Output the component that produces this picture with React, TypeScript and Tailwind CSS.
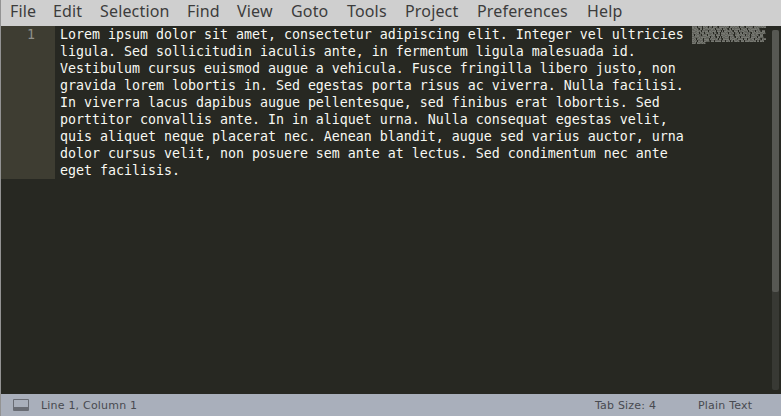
const MENUS = [
  { label: "File", width: "w-[43px]" },
  { label: "Edit", width: "w-[47px]" },
  { label: "Selection", width: "w-[87px]" },
  { label: "Find", width: "w-[50px]" },
  { label: "View", width: "w-[54px]" },
  { label: "Goto", width: "w-[56px]" },
  { label: "Tools", width: "w-[58px]" },
  { label: "Project", width: "w-[72px]" },
  { label: "Preferences", width: "w-[110px]" },
  { label: "Help", width: "w-[50px]" },
];

const LINES = [
  "Lorem ipsum dolor sit amet, consectetur adipiscing elit. Integer vel ultricies",
  "ligula. Sed sollicitudin iaculis ante, in fermentum ligula malesuada id.",
  "Vestibulum cursus euismod augue a vehicula. Fusce fringilla libero justo, non",
  "gravida lorem lobortis in. Sed egestas porta risus ac viverra. Nulla facilisi.",
  "In viverra lacus dapibus augue pellentesque, sed finibus erat lobortis. Sed",
  "porttitor convallis ante. In in aliquet urna. Nulla consequat egestas velit,",
  "quis aliquet neque placerat nec. Aenean blandit, augue sed varius auctor, urna",
  "dolor cursus velit, non posuere sem ante at lectus. Sed condimentum nec ante",
  "eget facilisis.",
];

function MenuBar() {
  return (
    <nav className="flex h-[26px] shrink-0 bg-[#cfcfcf] pl-[9px] font-['Noto_Sans',sans-serif] text-[16px] leading-[23px] tracking-[0.16px] text-[#3c3c3c]">
      {MENUS.map((m) => (
        <span key={m.label} className={`${m.width} shrink-0 whitespace-nowrap`}>
          {m.label}
        </span>
      ))}
    </nav>
  );
}

function Minimap() {
  return (
    <svg className="h-[18px] w-[74px] shrink-0" viewBox="0 0 78 18" preserveAspectRatio="none" shapeRendering="crispEdges">
      {LINES.map((line, row) =>
        [...line].map((ch, col) => {
          if (ch === " ") return null;
          const tall = /[A-Zbdfhklti]/.test(ch);
          const low = /[.,]/.test(ch);
          return (
            <g key={`${row}-${col}`} fill="#92938c">
              <rect x={col} y={row * 2} width="1" height="1" opacity={low ? 0.15 : tall ? 0.7 : 0.56} />
              <rect x={col} y={row * 2 + 1} width="1" height="1" opacity={low ? 0.35 : /[rtil]/.test(ch) ? 0.54 : 0.75} />
            </g>
          );
        }),
      )}
    </svg>
  );
}

function Editor() {
  return (
    <main className="flex min-h-0 flex-1 bg-[#272822]">
      <div className="h-[153px] w-[54px] shrink-0 bg-[#3e3d32] pr-[20px] text-right font-['DejaVu_Sans_Mono',monospace] text-[13.29px] leading-[17px] text-[#8f908a]">
        1
      </div>
      <div className="w-[637px] shrink-0 pl-[5px] font-['DejaVu_Sans_Mono',monospace] text-[13.29px] leading-[17px] text-[#f8f8f2]">
        {LINES.map((line) => (
          <div key={line} className="h-[17px] whitespace-pre">
            {line}
          </div>
        ))}
      </div>
      <Minimap />
      <div className="ml-auto mr-[2px] mt-[4px] h-[360px] w-[7px] shrink-0 rounded-[2px] bg-[#383934]">
        <div className="h-[262px] rounded-[2px] bg-[#575853]" />
      </div>
    </main>
  );
}

function StatusBar() {
  return (
    <footer className="flex h-[22px] shrink-0 items-center bg-[#a9afbb] font-['DejaVu_Sans',sans-serif] text-[11px] leading-[20px] tracking-[0.2px] text-[#484a50]">
      <div className="ml-[12px] h-[12px] w-[16px] shrink-0 rounded-[1px] border border-b-[4px] border-[#696c74]" />
      <span className="ml-[12px] w-[554px] shrink-0 whitespace-nowrap pt-[2px]">Line 1, Column 1</span>
      <span className="w-[103px] shrink-0 whitespace-nowrap pt-[2px]">Tab Size: 4</span>
      <span className="whitespace-nowrap pt-[2px]">Plain Text</span>
    </footer>
  );
}

export default function App() {
  return (
    <div className="flex h-[416px] w-[781px] flex-col overflow-hidden border-l border-[#939393] bg-[#272822]">
      <MenuBar />
      <Editor />
      <StatusBar />
    </div>
  );
}
